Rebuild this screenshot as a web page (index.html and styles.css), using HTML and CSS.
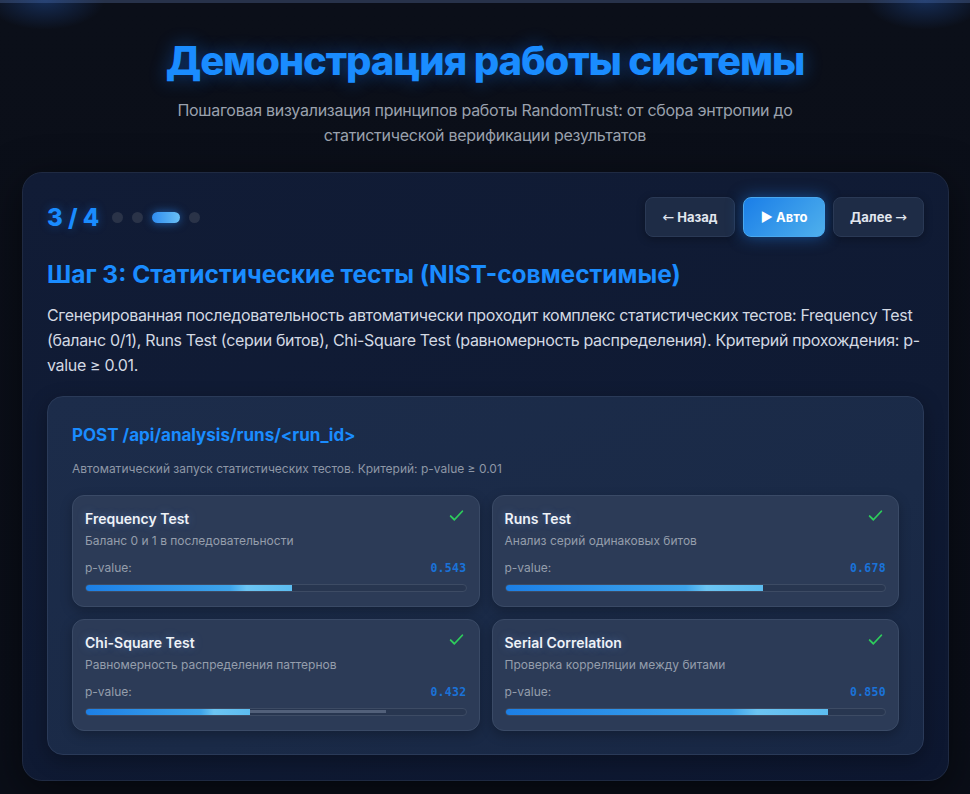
FILE: index.html
```html
<!DOCTYPE html>
<html lang="ru">
<head>
<meta charset="utf-8">
<title>Демонстрация</title>
<link rel="stylesheet" href="styles.css">
</head>
<body>
<div class="page">
  <div class="topline"></div>
  <div class="glow glow-left"></div>
  <div class="glow glow-right"></div>
  <header class="hero">
    <h1 class="title">Демонстрация работы системы</h1>
    <p class="subtitle">Пошаговая визуализация принципов работы RandomTrust: от сбора энтропии до статистической верификации результатов</p>
  </header>

  <section class="demo">
    <div class="demo-top">
      <div class="progress">
        <span class="counter">3 / 4</span>
        <span class="dot"></span>
        <span class="dot"></span>
        <span class="dot active"></span>
        <span class="dot"></span>
      </div>
      <div class="controls">
        <button class="btn btn-back"><span class="arrow">←</span> Назад</button>
        <button class="btn primary">▶ Авто</button>
        <button class="btn btn-next">Далее <span class="arrow">→</span></button>
      </div>
    </div>
    <h2 class="step-title">Шаг 3: Статистические тесты (NIST-совместимые)</h2>
    <p class="step-text">Сгенерированная последовательность автоматически проходит комплекс статистических тестов: Frequency Test (баланс 0/1), Runs Test (серии битов), Chi-Square Test (равномерность распределения). Критерий прохождения: p-value ≥ 0.01.</p>

    <div class="panel">
      <div class="endpoint">POST /api/analysis/runs/&lt;run_id&gt;</div>
      <div class="panel-desc">Автоматический запуск статистических тестов. Критерий: p-value ≥ 0.01</div>
      <div class="tests">
        <div class="test">
          <div class="test-head"><span class="test-name">Frequency Test</span><svg class="check" viewBox="0 0 16 16"><path d="M2.5 8.5l3.5 3.5 7.5-8"/></svg></div>
          <div class="test-desc">Баланс 0 и 1 в последовательности</div>
          <div class="pv"><span>p-value:</span><span class="pv-num">0.543</span></div>
          <div class="bar"><div class="fill" style="width:54.3%"></div></div>
        </div>
        <div class="test">
          <div class="test-head"><span class="test-name">Runs Test</span><svg class="check" viewBox="0 0 16 16"><path d="M2.5 8.5l3.5 3.5 7.5-8"/></svg></div>
          <div class="test-desc">Анализ серий одинаковых битов</div>
          <div class="pv"><span>p-value:</span><span class="pv-num">0.678</span></div>
          <div class="bar"><div class="fill" style="width:67.8%"></div></div>
        </div>
        <div class="test">
          <div class="test-head"><span class="test-name">Chi-Square Test</span><svg class="check" viewBox="0 0 16 16"><path d="M2.5 8.5l3.5 3.5 7.5-8"/></svg></div>
          <div class="test-desc">Равномерность распределения паттернов</div>
          <div class="pv"><span>p-value:</span><span class="pv-num">0.432</span></div>
          <div class="bar"><div class="shine" style="width:79%"></div><div class="fill" style="width:43.2%"></div></div>
        </div>
        <div class="test">
          <div class="test-head"><span class="test-name">Serial Correlation</span><svg class="check" viewBox="0 0 16 16"><path d="M2.5 8.5l3.5 3.5 7.5-8"/></svg></div>
          <div class="test-desc">Проверка корреляции между битами</div>
          <div class="pv"><span>p-value:</span><span class="pv-num">0.850</span></div>
          <div class="bar"><div class="fill" style="width:85%"></div></div>
        </div>
      </div>
    </div>
  </section>
</div>
</body>
</html>
```

FILE: styles.css
```css
* { box-sizing: border-box; }
html, body { margin: 0; padding: 0; }
body {
  background: #0a0e17;
  font-family: Inter, "Noto Sans", sans-serif;
  color: #d5dbe5;
  overflow: hidden;
}
.page {
  position: relative;
  width: 970px;
  height: 794px;
  padding: 0 21px;
  background: linear-gradient(180deg, #0b0f19 0%, #0a0e18 100%);
}
.topline {
  position: absolute;
  left: 0; right: 0; top: 0;
  height: 3px;
  background: #27324a;
}
.glow {
  position: absolute;
  top: -30px;
  width: 120px;
  height: 60px;
  border-radius: 50%;
  background: radial-gradient(ellipse at center, rgba(40,100,200,0.35), rgba(40,100,200,0) 70%);
  pointer-events: none;
}
.glow-left { left: -15px; }
.glow-right { right: -15px; }

.hero {
  text-align: center;
  padding-top: 37px;
}
.title {
  margin: 0;
  font-size: 40px;
  font-weight: 800;
  letter-spacing: -1.1px;
  line-height: 48px;
  color: #1a8cff;
  text-shadow: 0 0 18px rgba(20,120,255,0.45);
}
.subtitle {
  margin: 13px auto 0;
  width: 640px;
  font-size: 16px;
  line-height: 25px;
  letter-spacing: -0.27px;
  color: #9aa1ad;
}

.demo {
  margin-top: 24px;
  margin-left: 1px;
  width: 927px;
  height: 609px;
  border-radius: 20px;
  border: 1px solid #1f2a42;
  background: linear-gradient(160deg, #111c36 0%, #0f1a33 60%, #0d1730 100%);
  box-shadow: 0 10px 40px rgba(0,0,0,0.5);
  padding: 24px 24px 0;
}
.demo-top {
  display: flex;
  justify-content: space-between;
  align-items: center;
}
.progress {
  display: flex;
  align-items: center;
  gap: 9px;
}
.counter {
  font-size: 24px;
  font-weight: 800;
  color: #1a8cff;
  margin-right: 4px;
  text-shadow: 0 0 10px rgba(20,120,255,0.4);
}
.dot {
  width: 11px;
  height: 11px;
  border-radius: 50%;
  background: #2a3348;
}
.dot.active {
  width: 28px;
  border-radius: 6px;
  background: linear-gradient(90deg, #2e8cf0, #6ac0f5);
  box-shadow: 0 0 10px rgba(40,140,255,0.6);
}
.controls {
  display: flex;
  gap: 8px;
}
.btn {
  height: 40px;
  padding: 0;
  border-radius: 8px;
  border: 1px solid #2a3955;
  background: #1e2c46;
  color: #e1e6ee;
  font-family: Inter, sans-serif;
  font-size: 13px;
  font-weight: 700;
  white-space: nowrap;
  box-shadow: 0 2px 8px rgba(0,0,0,0.3);
}
.btn .arrow {
  font-family: "DejaVu Sans", sans-serif;
  font-weight: 400;
  font-size: 14px;
}
.btn-back { width: 90px; }
.btn.primary {
  width: 82px;
  border-color: #4aa8ef;
  background: linear-gradient(135deg, #1a7ee8 0%, #4fb0ec 100%);
  color: #ffffff;
  box-shadow: 0 0 16px rgba(30,130,240,0.5);
}
.btn-next { width: 91px; }

.step-title {
  margin: 22px 0 0;
  font-size: 24.5px;
  font-weight: 700;
  line-height: 30px;
  color: #1a8cff;
}
.step-text {
  margin: 14px 0 0;
  font-size: 16px;
  line-height: 25px;
  letter-spacing: -0.33px;
  color: #d3d9e3;
}

.panel {
  margin-top: 18px;
  height: 359px;
  border-radius: 16px;
  border: 1px solid #2a3a58;
  background: linear-gradient(160deg, #1c2c4a 0%, #1a2a47 60%, #182744 100%);
  box-shadow: 0 6px 20px rgba(0,0,0,0.3);
  padding: 26px 24px 0;
}
.endpoint {
  font-size: 17px;
  font-weight: 700;
  line-height: 24px;
  color: #1a8cff;
}
.panel-desc {
  margin-top: 13px;
  font-size: 12px;
  line-height: 18px;
  color: #8e97a6;
}
.tests {
  margin-top: 17px;
  display: grid;
  grid-template-columns: 1fr 1fr;
  gap: 12px;
}
.test {
  height: 112px;
  border-radius: 12px;
  border: 1px solid #3a4a66;
  background: #2c3b57;
  box-shadow: 0 4px 12px rgba(0,0,0,0.25);
  padding: 13px 12px 0 12px;
}
.test-head {
  display: flex;
  justify-content: space-between;
  align-items: flex-start;
}
.test-name {
  font-size: 14px;
  font-weight: 600;
  line-height: 20px;
  color: #eef2f7;
  text-shadow: 0 0 8px rgba(120,170,255,0.35);
}
.check {
  width: 17px;
  height: 17px;
  margin-top: -2px;
  margin-right: 2px;
  fill: none;
  stroke: #2ecc5c;
  stroke-width: 1.7;
  stroke-linecap: round;
  stroke-linejoin: round;
}
.test-desc {
  margin-top: 4px;
  font-size: 12px;
  line-height: 16px;
  color: #959eac;
}
.pv {
  margin-top: 10px;
  display: flex;
  justify-content: space-between;
  align-items: center;
  font-size: 12px;
  line-height: 18px;
  color: #959eac;
}
.pv-num {
  font-family: "DejaVu Sans Mono", "Liberation Mono", monospace;
  font-size: 11.5px;
  font-weight: 700;
  color: #1a72d8;
  letter-spacing: 0.3px;
}
.bar {
  position: relative;
  margin-top: 7px;
  height: 8px;
  border-radius: 4px;
  background: #283650;
  border: 1px solid #3d4b64;
  overflow: hidden;
}
.fill {
  position: absolute;
  left: 0; top: 0; bottom: 0;
  background: linear-gradient(90deg, #1c7fe6 0%, #3ea4ea 70%, #6cc4f2 78%, #5cbcf0 100%);
}
.shine {
  position: absolute;
  left: 0; top: 1px; height: 3px;
  background: rgba(160,175,200,0.35);
}
```
